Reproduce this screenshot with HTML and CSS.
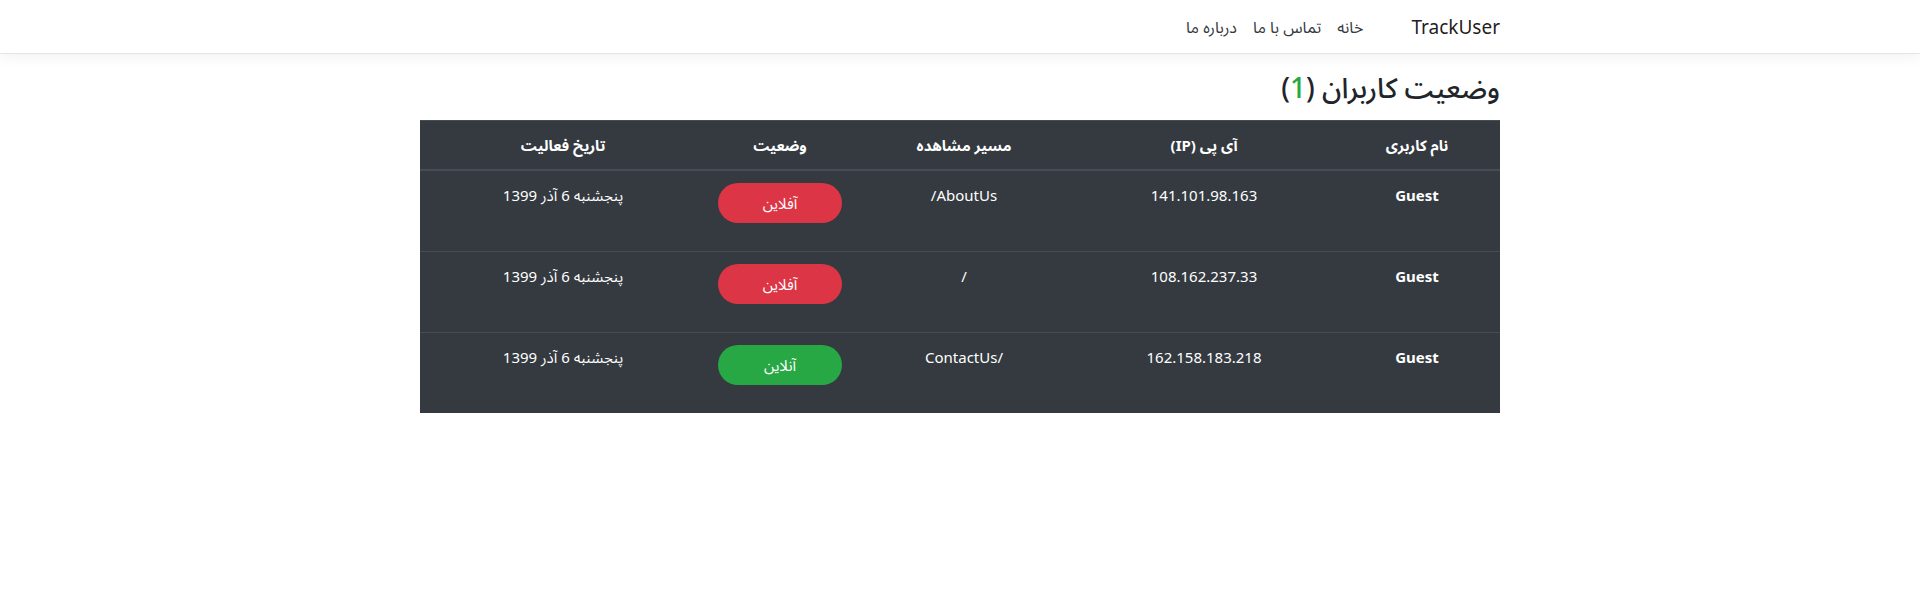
FILE: index.html
```html
<!DOCTYPE html>
<html lang="fa" dir="rtl">
<head>
<meta charset="utf-8">
<title>TrackUser</title>
<link rel="stylesheet" href="styles.css">
</head>
<body>
<header class="navbar">
  <div class="container nav-inner">
    <a class="brand" href="#">TrackUser</a>
    <ul class="nav-links">
      <li><a class="nav-link" href="#">خانه</a></li>
      <li><a class="nav-link" href="#">تماس با ما</a></li>
      <li><a class="nav-link" href="#">درباره ما</a></li>
    </ul>
  </div>
</header>
<main class="container main">
  <h3 class="title">وضعیت کاربران (<span class="count">1</span>)</h3>
  <table class="users">
    <colgroup>
      <col class="c-user"><col class="c-ip"><col class="c-path"><col class="c-status"><col class="c-date">
    </colgroup>
    <thead>
      <tr>
        <th>نام کاربری</th>
        <th>آی پی (IP)</th>
        <th>مسیر مشاهده</th>
        <th>وضعیت</th>
        <th>تاریخ فعالیت</th>
      </tr>
    </thead>
    <tbody>
      <tr>
        <td class="user">Guest</td>
        <td>141.101.98.163</td>
        <td><span dir="ltr">/AboutUs</span></td>
        <td><p class="badge offline">آفلاین</p></td>
        <td>پنجشنبه 6 آذر 1399</td>
      </tr>
      <tr>
        <td class="user">Guest</td>
        <td>108.162.237.33</td>
        <td>/</td>
        <td><p class="badge offline">آفلاین</p></td>
        <td>پنجشنبه 6 آذر 1399</td>
      </tr>
      <tr>
        <td class="user">Guest</td>
        <td>162.158.183.218</td>
        <td>/ContactUs</td>
        <td><p class="badge online">آنلاین</p></td>
        <td>پنجشنبه 6 آذر 1399</td>
      </tr>
    </tbody>
  </table>
</main>
</body>
</html>
```
FILE: styles.css
```css
* { box-sizing: border-box; }
html, body { margin: 0; padding: 0; }
body {
  font-family: "Noto Sans", "Noto Sans Arabic", "DejaVu Sans", sans-serif;
  font-size: 16px;
  line-height: 1.5;
  color: #212529;
  background: #fff;
}
.container {
  width: 1080px;
  margin: 0 auto;
}
.navbar {
  height: 54px;
  border-bottom: 1px solid #e5e5e5;
  box-shadow: 0 4px 12px rgba(0, 0, 0, 0.05);
  background: #fff;
}
.nav-inner {
  height: 53px;
  display: flex;
  align-items: center;
}
.brand {
  font-size: 19px;
  color: rgba(0, 0, 0, 0.9);
  text-decoration: none;
  margin-left: 40px;
  line-height: 30px;
}
.nav-links {
  list-style: none;
  margin: 0;
  padding: 0;
  display: flex;
}
.nav-link {
  display: block;
  padding: 0 8px;
  font-size: 16px;
  color: #343a40;
  text-decoration: none;
}
.main {
  padding-top: 16px;
}
.title {
  margin: 0 0 16px;
  font-size: 28px;
  font-weight: 500;
  line-height: 34px;
}
.count { color: #28a745; }
.users {
  width: 100%;
  table-layout: fixed;
  border-collapse: collapse;
  background: #343a40;
  color: #fff;
}
.c-user { width: 166px; }
.c-ip { width: 260px; }
.c-path { width: 220px; }
.c-status { width: 148px; }
.c-date { width: 286px; }
.users th, .users td {
  padding: 12px;
  text-align: center;
  vertical-align: top;
  border-top: 1px solid #454d55;
  line-height: 24px;
  font-size: 15px;
}
.users th {
  font-weight: bold;
  border-bottom: 2px solid #454d55;
}
.users td.user { font-weight: bold; }
.badge {
  margin: 0 0 16px;
  height: 40px;
  line-height: 40px;
  border-radius: 20px;
  color: #fff;
  font-size: 15px;
}
.offline { background: #dc3545; }
.online { background: #28a745; }
```
